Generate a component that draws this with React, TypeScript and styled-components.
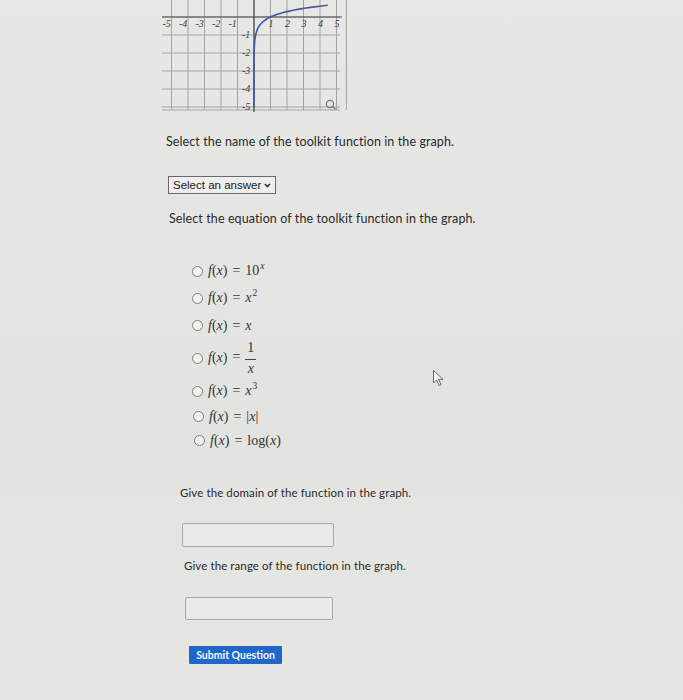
import styled, { createGlobalStyle } from 'styled-components';

const GlobalStyle = createGlobalStyle`
  html, body {
    margin: 0;
    padding: 0;
    background: #e5e6e3;
  }
  body {
    font-family: Lato, "Open Sans", sans-serif;
    color: #2b2b2b;
  }
`;

const Page = styled.main`
  position: relative;
  width: 683px;
  height: 700px;
  overflow: hidden;
  background: linear-gradient(180deg, #e7e8e5 0%, #e3e4e1 60%, #e6e6e3 100%);
`;

const Column = styled.div`
  display: flex;
  flex-direction: column;
  padding-left: 160px;
`;

const Prompt = styled.p<{ $indent?: number; $top: number }>`
  margin: ${(p) => p.$top}px 0 0 ${(p) => p.$indent ?? 0}px;
  font-size: 12.5px;
  line-height: 16px;
  font-weight: 400;
  color: #2a2a2a;
  letter-spacing: 0.1px;
`;

const SmallPrompt = styled(Prompt)`
  font-size: 11.5px;
  line-height: 14px;
`;

const Dropdown = styled.div`
  margin: 26px 0 0 8px;
  width: 108px;
  height: 18px;
  box-sizing: border-box;
  border: 1px solid #6a6a6a;
  background: #eeeeec;
  display: flex;
  align-items: center;
  gap: 3px;
  padding: 0 4px;
  font-family: "Liberation Sans", Arial, sans-serif;
  font-size: 11.5px;
  white-space: nowrap;
  color: #222;
`;

const OptionList = styled.div`
  margin: 31px 0 0 32px;
  display: flex;
  flex-direction: column;
`;

const Option = styled.label<{ $h: number; $shift?: number }>`
  height: ${(p) => p.$h}px;
  display: flex;
  align-items: center;
  gap: 5px;
  margin-left: ${(p) => p.$shift ?? 0}px;
`;

const Radio = styled.span`
  width: 9px;
  height: 9px;
  border-radius: 50%;
  border: 1px solid #7b7b7b;
  background: #f2f2f0;
  flex: none;
`;

const MathText = styled.span`
  font-family: "Liberation Serif", "Times New Roman", serif;
  font-size: 14px;
  line-height: 16px;
  color: #333;
  display: inline-block;
  white-space: pre;
`;

const Var = styled.i`
  font-style: italic;
`;

const Eq = styled.span`
  margin: 0 5px;
`;

const Sup = styled.span`
  font-size: 9.5px;
  position: relative;
  top: -6px;
  margin-left: 1px;
`;

const Frac = styled.span`
  display: inline-flex;
  flex-direction: column;
  align-items: center;
  vertical-align: middle;
  line-height: 18px;
`;

const FracTop = styled.span`
  border-bottom: 1px solid #444;
  padding: 0 2px 2px;
`;

const Field = styled.div<{ $indent: number; $top: number; $w: number; $h: number }>`
  margin: ${(p) => p.$top}px 0 0 ${(p) => p.$indent}px;
  width: ${(p) => p.$w}px;
  height: ${(p) => p.$h}px;
  box-sizing: border-box;
  border: 1px solid #a9aaa8;
  border-radius: 2px;
  background: #e9eae8;
`;

const SubmitButton = styled.button`
  margin: 26px 0 0 29px;
  width: 93px;
  height: 18px;
  padding: 0;
  border: none;
  border-radius: 1px;
  background: #1f67c9;
  color: #f4f7fb;
  font-family: Lato, "Open Sans", sans-serif;
  font-weight: 700;
  font-size: 10.5px;
  align-self: flex-start;
`;

const Cursor = styled.svg`
  position: absolute;
  left: 432px;
  top: 369px;
`;

const Glyph = styled.text`
  font-family: "Liberation Serif", serif;
  font-style: italic;
  font-size: 10px;
  fill: #3a3a3a;
`;

const ox = 94;
const oy = 17;
const ux = 16.5;
const uy = 18;

const curve = (() => {
  const pts: string[] = [];
  for (let t = -5; t <= Math.log10(5) + 0.0001; t += 0.05) {
    const x = Math.pow(10, t);
    pts.push(`${(ox + ux * x).toFixed(2)},${(oy - uy * t).toFixed(2)}`);
  }
  return 'M' + pts.join(' L');
})();

const Graph = () => {
  const xs = [-5, -4, -3, -2, -1, 0, 1, 2, 3, 4, 5];
  const ys = [1, 0, -1, -2, -3, -4, -5];
  return (
    <svg width="190" height="118" viewBox="0 0 190 118" style={{ display: 'block' }}>
      {xs.map((x) => (
        <line key={'v' + x} x1={ox + ux * x} y1={0} x2={ox + ux * x} y2={110} stroke="#a3a4a2" strokeWidth={1} />
      ))}
      <line x1={ox + ux * 5.6} y1={0} x2={ox + ux * 5.6} y2={110} stroke="#a3a4a2" />
      {ys.map((y) => (
        <line key={'h' + y} x1={2} y1={oy - uy * y} x2={180} y2={oy - uy * y} stroke="#a3a4a2" strokeWidth={1} />
      ))}
      <line x1={2} y1={110} x2={180} y2={110} stroke="#a3a4a2" />
      <line x1={2} y1={oy} x2={182} y2={oy} stroke="#4a4a4a" strokeWidth={1.2} />
      <line x1={ox} y1={0} x2={ox} y2={112} stroke="#4a4a4a" strokeWidth={1.2} />
      {xs.filter((x) => x !== 0).map((x) => (
        <Glyph key={'lx' + x} x={ox + ux * x - (x < 0 ? 9 : 2)} y={oy + 10}>
          {x < 0 ? '-' + -x : x}
        </Glyph>
      ))}
      {ys.filter((y) => y < 0).map((y) => (
        <Glyph key={'ly' + y} x={ox - 12} y={oy - uy * y + 3}>
          {'-' + -y}
        </Glyph>
      ))}
      <path d={curve} fill="none" stroke="#4854a6" strokeWidth={1.6} />
      <circle cx={170} cy={104} r={3.6} fill="none" stroke="#777" strokeWidth={1.2} />
      <line x1={172.6} y1={106.6} x2={175.5} y2={109.5} stroke="#777" strokeWidth={1.4} />
    </svg>
  );
};

const Fx = () => (
  <>
    <Var>f</Var>(<Var>x</Var>)<Eq>=</Eq>
  </>
);

export default function App() {
  return (
    <>
      <GlobalStyle />
      <Page>
        <Column>
          <Graph />
          <Prompt $top={16} $indent={6}>Select the name of the toolkit function in the graph.</Prompt>
          <Dropdown>
            <span>Select an answer</span>
            <svg width="9" height="7" viewBox="0 0 9 7">
              <path d="M1.2 1.5 L4.5 5 L7.8 1.5" fill="none" stroke="#2a2a2a" strokeWidth={2} />
            </svg>
          </Dropdown>
          <Prompt $top={17} $indent={9}>Select the equation of the toolkit function in the graph.</Prompt>
          <OptionList>
            <Option $h={27}>
              <Radio />
              <MathText>
                <Fx />10<Sup><Var>x</Var></Sup>
              </MathText>
            </Option>
            <Option $h={27}>
              <Radio />
              <MathText>
                <Fx /><Var>x</Var><Sup>2</Sup>
              </MathText>
            </Option>
            <Option $h={27}>
              <Radio />
              <MathText>
                <Fx /><Var>x</Var>
              </MathText>
            </Option>
            <Option $h={38}>
              <Radio />
              <MathText>
                <Fx />
                <Frac>
                  <FracTop>1</FracTop>
                  <Var>x</Var>
                </Frac>
              </MathText>
            </Option>
            <Option $h={28}>
              <Radio />
              <MathText>
                <Fx /><Var>x</Var><Sup>3</Sup>
              </MathText>
            </Option>
            <Option $h={23} $shift={1}>
              <Radio />
              <MathText>
                <Fx />|<Var>x</Var>|
              </MathText>
            </Option>
            <Option $h={25} $shift={2}>
              <Radio />
              <MathText>
                <Fx />log(<Var>x</Var>)
              </MathText>
            </Option>
          </OptionList>
          <SmallPrompt $top={33} $indent={20}>Give the domain of the function in the graph.</SmallPrompt>
          <Field $top={23} $indent={22} $w={152} $h={24} />
          <SmallPrompt $top={12} $indent={24}>Give the range of the function in the graph.</SmallPrompt>
          <Field $top={24} $indent={25} $w={148} $h={23} />
          <SubmitButton>Submit Question</SubmitButton>
        </Column>
        <Cursor width="14" height="18" viewBox="0 0 14 18">
          <path d="M1.5 1.5 L1.5 14 L4.5 11 L7 16.5 L9 15.6 L6.6 10.3 L11 10.3 Z" fill="#f4f4f4" stroke="#666" strokeWidth={1} />
        </Cursor>
      </Page>
    </>
  );
}
